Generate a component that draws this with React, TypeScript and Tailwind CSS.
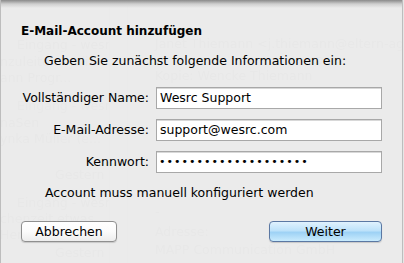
import React from "react";

const ghost = "text-[#b9b9b9] text-[12.5px] leading-4 whitespace-nowrap";

function Background() {
  return (
    <div className="flex h-[263px] w-[404px] bg-[#e6e6e6]" style={{ fontFamily: '"DejaVu Sans", sans-serif' }}>
      <div className="flex w-[110px] flex-col overflow-hidden border-r border-[#d2d2d2] pt-[37px] blur-[0.7px]">
        <div className={ghost + " pl-[17px]"}>Eingang - wesrc</div>
        <div className={ghost + " mt-[1px]"}>nzuleiten - Juli</div>
        <div className={ghost}>ann Progr...</div>
        <div className={ghost + " mt-[12px] pl-[17px]"}>Eingang - wesrc</div>
        <div className={ghost + " mt-[1px]"}>naSen</div>
        <div className={ghost}>ynka Müller (e...</div>
        <div className={ghost + " mt-[20px] pl-[55px] text-[#b0bed8]"}>Gestern</div>
        <div className={ghost + " mt-[12px] pl-[17px]"}>Eingang - wesrc</div>
        <div className={ghost}>chenzeit etwas</div>
        <div className={ghost}>Herausforderu...</div>
        <div className={ghost + " mt-[2px] pl-[55px] text-[#b0bed8]"}>Gestern</div>
        <div className={ghost + " mt-[10px] pl-[17px]"}>Eingang - wesrc</div>
      </div>
      <div className="w-[18px] border-r border-[#d6d6d6] bg-[#e3e3e3]" />
      <div className="flex flex-1 flex-col overflow-hidden pt-[36px] pl-[27px] blur-[0.7px]">
        <div className={ghost}>Janet Thiemann &lt;j.thiemann@eltern-ag.de&gt;</div>
        <div className={ghost + " pl-[150px]"}>.com&gt;</div>
        <div className={ghost}>Kopie: Wencke Thiemann</div>
        <div className={ghost + " mt-[120px]"}>-</div>
        <div className={ghost + " mt-[4px]"}>Adresse:</div>
        <div className={ghost + " mt-[2px]"}>MAPP Communication GmbH</div>
      </div>
    </div>
  );
}

export default function App() {
  const font = { fontFamily: '"DejaVu Sans", "Liberation Sans", sans-serif' };
  return (
    <div className="relative h-[263px] w-[404px] overflow-hidden bg-[#e6e6e6]">
      <Background />
      <div
        className="absolute inset-y-0 left-0 w-[403px] border-r border-l border-[#bdbdbd] bg-[#ececec]/[0.92] text-[12.5px] text-black"
        style={font}
      >
        <div className="h-[8px] w-full bg-gradient-to-b from-[#8a8a8a] via-[#cfcfcf] to-transparent" />
        <div className="flex flex-col">
          <div className="mt-[15px] pl-[20px] text-[12px] font-bold leading-4">E-Mail-Account hinzufügen</div>
          <div className="mt-[14px] pl-[43px] leading-4">Geben Sie zunächst folgende Informationen ein:</div>
          <div className="mt-[18px] grid grid-cols-[148px_226px] gap-x-[7px] gap-y-[10px]">
            <div className="flex h-[22px] items-center justify-end leading-4">Vollständiger Name:</div>
            <div className="flex h-[22px] items-center border border-[#a8a8a8] bg-white pl-[3px] leading-4 shadow-[inset_0_1px_0_#d8d8d8]">Wesrc Support</div>
            <div className="flex h-[22px] items-center justify-end leading-4">E-Mail-Adresse:</div>
            <div className="flex h-[22px] items-center border border-[#a8a8a8] bg-white pl-[3px] leading-4 shadow-[inset_0_1px_0_#d8d8d8]">support@wesrc.com</div>
            <div className="flex h-[22px] items-center justify-end leading-4">Kennwort:</div>
            <div className="flex h-[22px] items-center border border-[#a8a8a8] bg-white pl-[2px] text-[11px] leading-4 tracking-[1px] shadow-[inset_0_1px_0_#d8d8d8]">••••••••••••••••••••</div>
          </div>
          <div className="mt-[12px] pl-[44px] leading-4">Account muss manuell konfiguriert werden</div>
          <div className="mt-[20px] flex items-center justify-between pl-[20px] pr-[20px]">
            <button className="flex h-[21px] w-[96px] items-center justify-center rounded-[4px] border border-[#8f8f8f] bg-gradient-to-b from-white via-[#fbfbfb] to-[#ededed] leading-4 shadow-[0_1px_1px_rgba(0,0,0,0.15)]">
              Abbrechen
            </button>
            <button className="flex h-[21px] w-[113px] items-center justify-center rounded-[4px] border border-[#5b78a3] bg-[linear-gradient(to_bottom,#e0f2fe_0%,#bde2fa_45%,#9ed2f5_55%,#c9ebfd_100%)] leading-4 shadow-[0_1px_1px_rgba(0,0,0,0.15)]">
              Weiter
            </button>
          </div>
        </div>
      </div>
    </div>
  );
}
